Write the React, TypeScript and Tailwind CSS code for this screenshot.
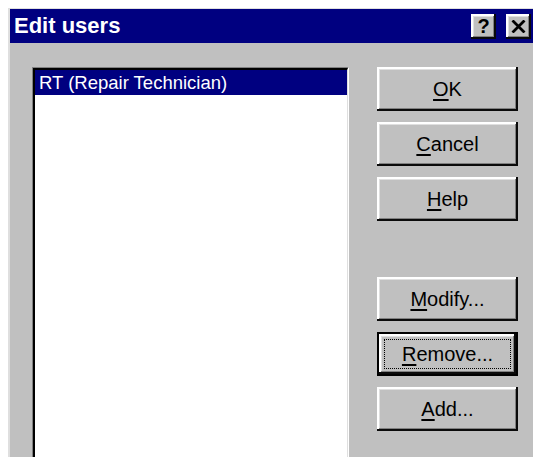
import React from "react";

const bevel =
  "shadow-[inset_-2px_-2px_#0a0a0a,inset_2px_2px_#ffffff,inset_-3px_-3px_#808080,inset_3px_3px_#dfdfdf]";

function Btn({
  mn,
  rest,
  focused,
}: {
  mn: string;
  rest: string;
  focused?: boolean;
}) {
  const label = (
    <span>
      <u className="underline-offset-[3px]">{mn}</u>
      {rest}
    </span>
  );
  if (focused) {
    return (
      <div className="h-[44px] w-[141px] bg-black p-[2px]">
        <div className={`flex h-full w-full bg-[#c0c0c0] p-[5px] ${bevel}`}>
          <div className="flex flex-1 items-center justify-center border border-dotted border-black">
            {label}
          </div>
        </div>
      </div>
    );
  }
  return (
    <div
      className={`flex h-[44px] w-[141px] items-center justify-center bg-[#c0c0c0] ${bevel}`}
    >
      {label}
    </div>
  );
}

function CapBtn({ children }: { children: React.ReactNode }) {
  return (
    <div
      className={`flex h-[25px] w-[25px] items-center justify-center bg-[#c0c0c0] text-[20px] font-bold leading-none text-black ${bevel}`}
    >
      {children}
    </div>
  );
}

export default function App() {
  return (
    <div
      className="h-[457px] w-[533px] overflow-hidden bg-white pl-[8px] pt-[8px]"
      style={{ fontFamily: '"Liberation Sans", Arial, sans-serif' }}
    >
      <div className="flex h-full flex-col border-l-2 border-t border-[#dfdfdf] bg-[#c0c0c0]">
        {/* caption bar */}
        <div className="flex h-[34px] shrink-0 items-center bg-[#000080] pl-[4px] pr-[2px]">
          <span className="flex-1 text-[22px] font-bold leading-none text-white">
            Edit users
          </span>
          <div className="flex gap-[10px]">
            <CapBtn>?</CapBtn>
            <CapBtn>
              <svg width="15" height="13" viewBox="0 0 15 13">
                <path
                  d="M1.5 0.5 L13.5 12.5 M13.5 0.5 L1.5 12.5"
                  stroke="black"
                  strokeWidth="2.8"
                  fill="none"
                />
              </svg>
            </CapBtn>
          </div>
        </div>

        {/* body */}
        <div className="flex flex-1 gap-[28px] pl-[22px] pt-[24px] text-[20px] text-black">
          {/* list box */}
          <div className="h-[420px] w-[317px] shrink-0 border-l border-t border-[#808080] border-r border-b border-r-[#ffffff] border-b-[#ffffff]">
            <div className="h-full border-l-2 border-t-2 border-black border-r border-b border-r-[#dfdfdf] border-b-[#dfdfdf] bg-white">
              <div className="flex h-[25px] items-center bg-[#000080] pl-[4px] text-[18.5px] text-white">
                RT (Repair Technician)
              </div>
            </div>
          </div>

          {/* button column */}
          <div className="flex flex-col">
            <div className="flex flex-col gap-[11px]">
              <Btn mn="O" rest="K" />
              <Btn mn="C" rest="ancel" />
              <Btn mn="H" rest="elp" />
            </div>
            <div className="mt-[56px] flex flex-col gap-[11px]">
              <Btn mn="M" rest="odify..." />
              <Btn mn="R" rest="emove..." focused />
              <Btn mn="A" rest="dd..." />
            </div>
          </div>
        </div>
      </div>
    </div>
  );
}
